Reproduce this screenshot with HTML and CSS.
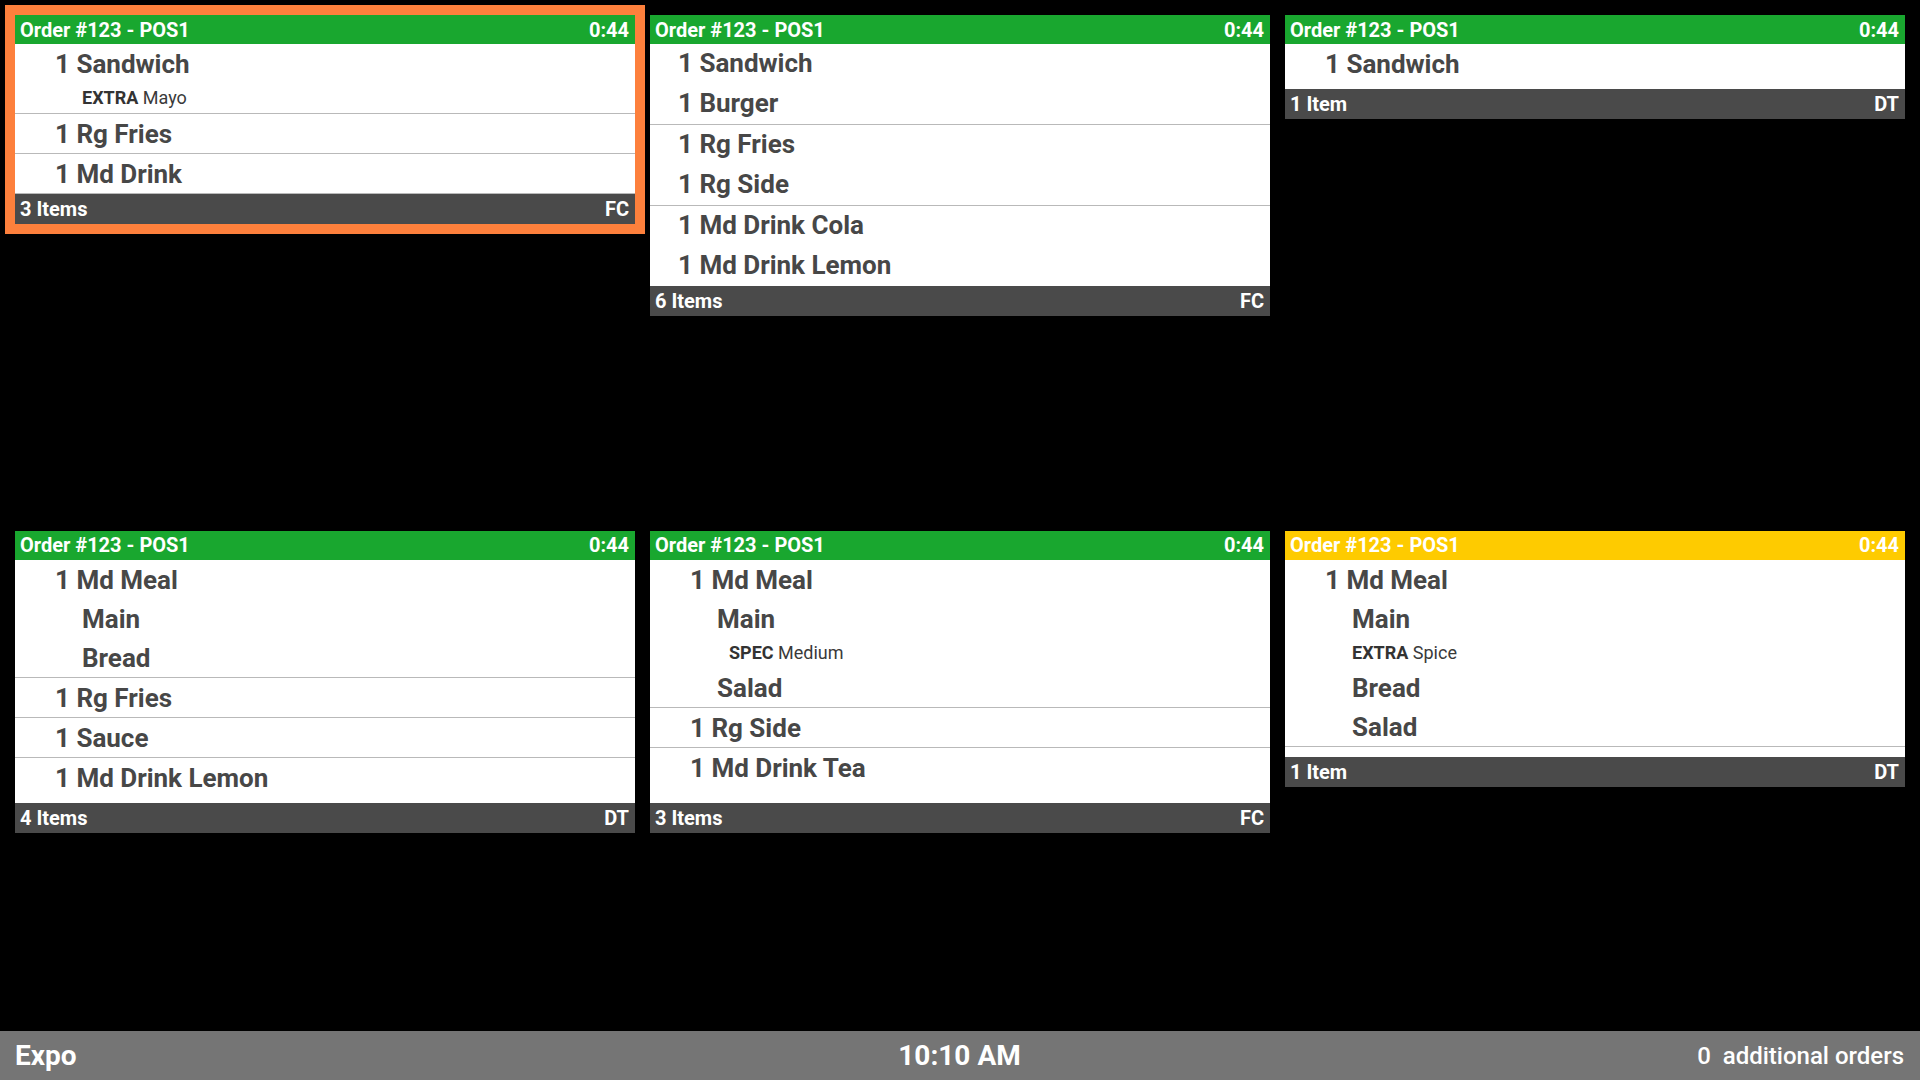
FILE: index.html
```html
<!DOCTYPE html>
<html lang="en">
<head>
<meta charset="utf-8">
<title>Expo</title>
<link rel="stylesheet" href="styles.css">
</head>
<body>
<div class="screen">
  <main class="orders">
    <section class="card selected">
      <header class="card-head"><span>Order #123 - POS1</span><span>0:44</span></header>
      <div class="card-body">
        <div class="group">
          <div class="item">1 Sandwich</div>
          <div class="mod"><b>EXTRA</b> Mayo</div>
        </div>
        <div class="group"><div class="item">1 Rg Fries</div></div>
        <div class="group"><div class="item">1 Md Drink</div></div>
      </div>
      <footer class="card-foot"><span>3 Items</span><span>FC</span></footer>
    </section>

    <section class="card narrow">
      <header class="card-head"><span>Order #123 - POS1</span><span>0:44</span></header>
      <div class="card-body">
        <div class="group">
          <div class="item">1 Sandwich</div>
          <div class="item">1 Burger</div>
        </div>
        <div class="group">
          <div class="item">1 Rg Fries</div>
          <div class="item">1 Rg Side</div>
        </div>
        <div class="group last">
          <div class="item">1 Md Drink Cola</div>
          <div class="item">1 Md Drink Lemon</div>
        </div>
      </div>
      <footer class="card-foot"><span>6 Items</span><span>FC</span></footer>
    </section>

    <section class="card">
      <header class="card-head"><span>Order #123 - POS1</span><span>0:44</span></header>
      <div class="card-body pad-s">
        <div class="group plain"><div class="item">1 Sandwich</div></div>
      </div>
      <footer class="card-foot"><span>1 Item</span><span>DT</span></footer>
    </section>

    <section class="card">
      <header class="card-head"><span>Order #123 - POS1</span><span>0:44</span></header>
      <div class="card-body pad-s">
        <div class="group">
          <div class="item">1 Md Meal</div>
          <div class="item sub">Main</div>
          <div class="item sub">Bread</div>
        </div>
        <div class="group"><div class="item">1 Rg Fries</div></div>
        <div class="group"><div class="item">1 Sauce</div></div>
        <div class="group plain"><div class="item">1 Md Drink Lemon</div></div>
      </div>
      <footer class="card-foot"><span>4 Items</span><span>DT</span></footer>
    </section>

    <section class="card">
      <header class="card-head"><span>Order #123 - POS1</span><span>0:44</span></header>
      <div class="card-body pad-l">
        <div class="group">
          <div class="item">1 Md Meal</div>
          <div class="item sub">Main</div>
          <div class="mod deep"><b>SPEC</b> Medium</div>
          <div class="item sub">Salad</div>
        </div>
        <div class="group"><div class="item">1 Rg Side</div></div>
        <div class="group plain"><div class="item">1 Md Drink Tea</div></div>
      </div>
      <footer class="card-foot"><span>3 Items</span><span>FC</span></footer>
    </section>

    <section class="card warn">
      <header class="card-head"><span>Order #123 - POS1</span><span>0:44</span></header>
      <div class="card-body pad-m">
        <div class="group">
          <div class="item">1 Md Meal</div>
          <div class="item sub">Main</div>
          <div class="mod"><b>EXTRA</b> Spice</div>
          <div class="item sub">Bread</div>
          <div class="item sub">Salad</div>
        </div>
      </div>
      <footer class="card-foot"><span>1 Item</span><span>DT</span></footer>
    </section>
  </main>

  <footer class="status">
    <span class="status-left">Expo</span>
    <span class="status-clock">10:10 AM</span>
    <span class="status-right">0&nbsp; additional orders</span>
  </footer>
</div>
</body>
</html>
```

FILE: styles.css
```css
* {
  box-sizing: border-box;
}

html, body {
  margin: 0;
  padding: 0;
  background: #000;
}

body {
  font-family: Roboto, "Liberation Sans", sans-serif;
  width: 1920px;
  height: 1080px;
  overflow: hidden;
}

.screen {
  display: flex;
  flex-direction: column;
  height: 1080px;
}

.orders {
  flex: 1;
  display: grid;
  grid-template-columns: repeat(3, 1fr);
  grid-template-rows: 1fr 1fr;
  gap: 15px;
  padding: 15px 15px 0 15px;
  align-items: start;
}

.card {
  display: flex;
  flex-direction: column;
  background: #fff;
}

.card.selected {
  outline: 10px solid #fd803c;
}

.card-head {
  display: flex;
  justify-content: space-between;
  align-items: center;
  height: 29px;
  padding: 0 6px 0 5px;
  background: #19a72f;
  color: #fff;
  font-size: 20px;
  font-weight: 700;
}

.card.warn .card-head {
  background: #fecb00;
}

.card-body {
  display: flex;
  flex-direction: column;
  color: #474747;
}

.card-body.pad-s {
  padding-bottom: 5px;
}

.card-body.pad-m {
  padding-bottom: 10px;
}

.card-body.pad-l {
  padding-bottom: 15px;
}

.group {
  border-bottom: 1px solid #b9b9b9;
}

.group.plain {
  border-bottom-color: #fff;
}

.group.last {
  border-bottom: none;
}

.item {
  height: 39px;
  padding-top: 2px;
  line-height: 37px;
  padding-left: 40px;
  font-size: 26px;
  font-weight: 700;
  white-space: nowrap;
}

.card.narrow .item {
  height: 40px;
  padding-top: 0;
  line-height: 39px;
  padding-left: 28px;
}

.item.sub {
  padding-left: 67px;
}

.mod {
  height: 30px;
  line-height: 29px;
  padding-left: 67px;
  font-size: 18px;
  font-weight: 400;
  color: #3a3a3a;
}

.mod b {
  font-weight: 700;
  color: #333;
}

.mod.deep {
  padding-left: 79px;
}

.card-foot {
  display: flex;
  justify-content: space-between;
  align-items: center;
  height: 30px;
  padding: 0 6px 0 5px;
  background: #4a4a4a;
  color: #fff;
  font-size: 20px;
  font-weight: 700;
}

.status {
  display: grid;
  grid-template-columns: 1fr auto 1fr;
  align-items: center;
  height: 49px;
  padding: 0 16px 0 15px;
  background: #757575;
  color: #fff;
}

.status-left {
  font-size: 28px;
  font-weight: 700;
}

.status-clock {
  font-size: 28px;
  font-weight: 700;
}

.status-right {
  justify-self: end;
  font-size: 24px;
  font-weight: 500;
}
```
